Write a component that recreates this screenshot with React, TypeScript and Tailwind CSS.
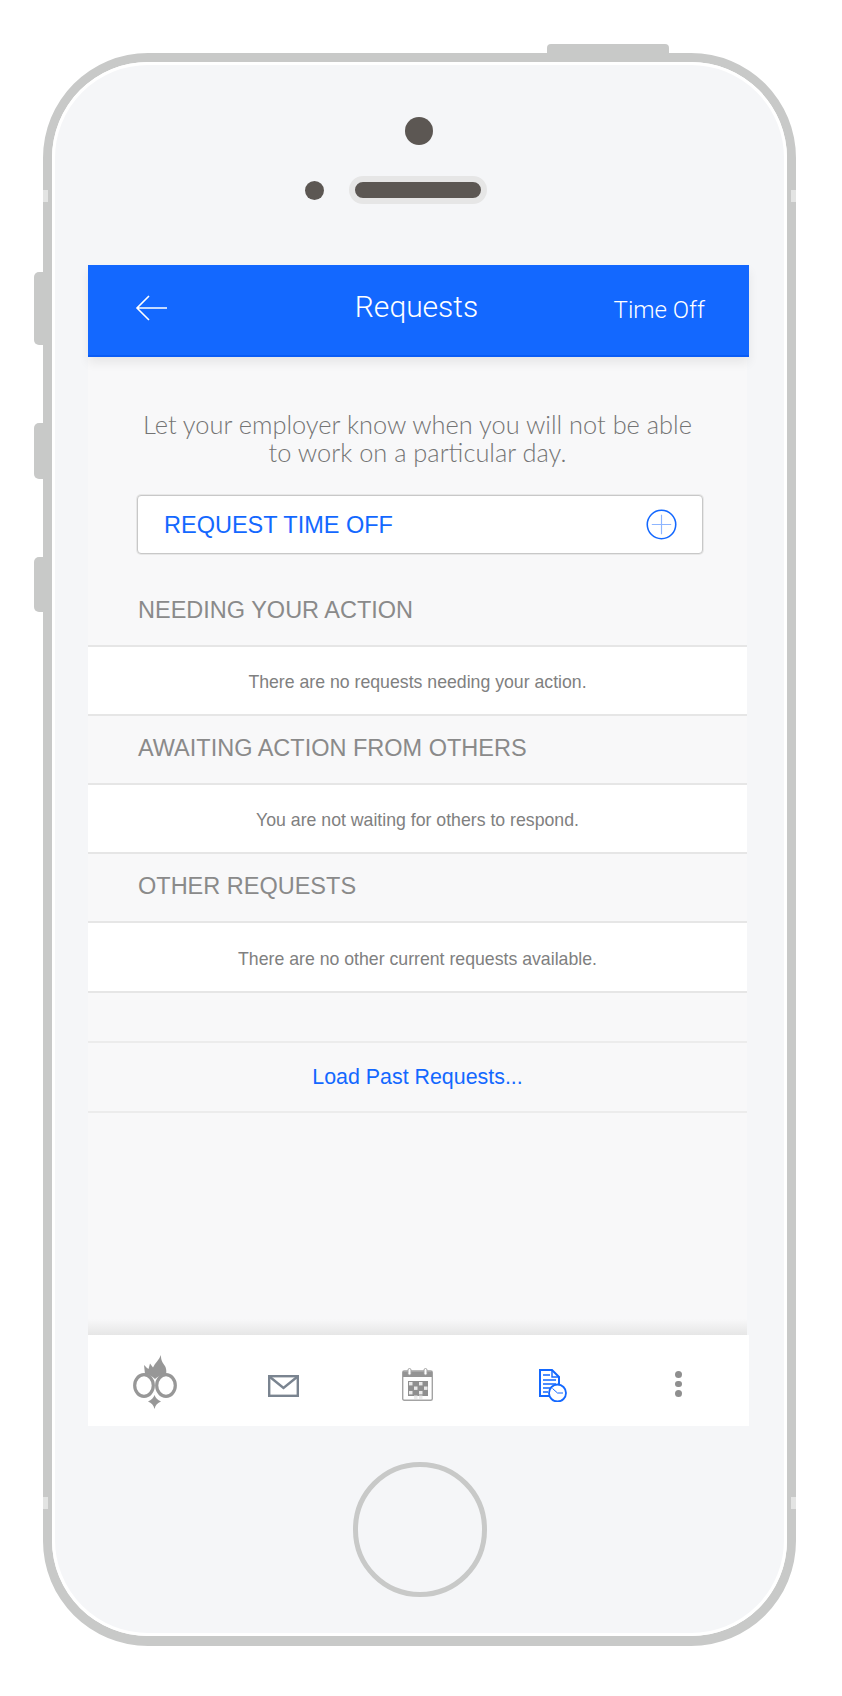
import { ReactNode } from "react";

const sans = "font-['Liberation_Sans',Arial,sans-serif]";

function OwlLogo() {
  return (
    <svg width="44" height="54" viewBox="0 0 44 54" className="block">
      <path
        d="M28 0C27.500 6 31 9 32.500 12C33.500 15 33.500 17 33 19.500C30 19 25 21 22 24C19 21 15 19 12 19L11 10C13 12 14 13 15.500 14L17 8.500L20 12.500C22 8 26 5 28 0Z"
        fill="#979797"
      />
      <ellipse cx="11" cy="30.500" rx="9.300" ry="10.800" fill="#fff" stroke="#979797" strokeWidth="3.200" />
      <ellipse cx="33" cy="30.500" rx="9.300" ry="10.800" fill="#fff" stroke="#979797" strokeWidth="3.200" />
      <path d="M21.500 40C22.500 43 24.500 45 28 46.500C24.500 48 22.500 50 21.500 54C20.500 50 18.500 48 15 46.500C18.500 45 20.500 43 21.500 40Z" fill="#979797" />
    </svg>
  );
}

function MailIcon() {
  return (
    <svg width="31" height="22" viewBox="0 0 31 22" className="block">
      <rect x="1.200" y="1.200" width="28.600" height="19.600" fill="none" stroke="#7a8490" strokeWidth="2.400" />
      <path d="M2 2L15.500 13L29 2" fill="none" stroke="#7a8490" strokeWidth="2.400" />
    </svg>
  );
}

function CalendarIcon() {
  const cells = [
    [9, 14], [19, 14], [14, 18.500], [24, 18.500], [9, 23], [19, 23], [14, 27.500], [19, 27.500],
  ];
  return (
    <svg width="31" height="33" viewBox="0 0 31 33" className="block">
      <rect x="0.700" y="3" width="29.600" height="29.300" rx="1.500" fill="#fff" stroke="#a3a3a3" strokeWidth="1.400" />
      <path d="M1 3.500H30V9H1Z" fill="#949494" />
      <rect x="6" y="0.500" width="3" height="6.500" rx="1.500" fill="#fff" stroke="#a3a3a3" />
      <rect x="22" y="0.500" width="3" height="6.500" rx="1.500" fill="#fff" stroke="#a3a3a3" />
      <rect x="6" y="13" width="20" height="15" fill="#8f8f8f" />
      {cells.map(([x, y]) => (
        <rect key={`${x}-${y}`} x={x - 2} y={y} width="3.500" height="3.400" fill="#e9e9e9" />
      ))}
    </svg>
  );
}

function RequestsIcon() {
  return (
    <svg width="29" height="33" viewBox="0 0 29 33" className="block">
      <path d="M1 1H13L20 8V27H1Z" fill="#fff" stroke="#1368ff" strokeWidth="2" />
      <path d="M13 1V8H20" fill="none" stroke="#1368ff" strokeWidth="1.400" />
      <path d="M4 6H11M4 11H17M4 15H17M4 19H12M4 23H9" stroke="#1368ff" strokeWidth="1.500" />
      <circle cx="18.500" cy="24" r="8.500" fill="#fff" stroke="#1368ff" strokeWidth="1.800" />
      <path d="M13.500 19.500L18.500 24H24" fill="none" stroke="#1368ff" strokeWidth="1" />
    </svg>
  );
}

function MoreIcon() {
  return (
    <div className="flex flex-col gap-[3px]">
      <div className="w-[7px] h-[6.5px] rounded-full bg-[#8f8f8f]" />
      <div className="w-[7px] h-[6.5px] rounded-full bg-[#8f8f8f]" />
      <div className="w-[7px] h-[6.5px] rounded-full bg-[#8f8f8f]" />
    </div>
  );
}

function SectionHeading({ children, className }: { children: ReactNode; className: string }) {
  return (
    <div className={`${className} flex items-center pl-[50px] text-[23.500px] leading-none text-[#8a8a8a] ${sans}`}>
      {children}
    </div>
  );
}

function MessageRow({ children, className }: { children: ReactNode; className: string }) {
  return (
    <div className={`${className} pt-[4px] flex items-center justify-center bg-white border-y-2 border-[#e6e6e6] text-[17.700px] text-[#808080] ${sans}`}>
      {children}
    </div>
  );
}

export default function App() {
  return (
    <div className="w-[842px] h-[1696px] bg-white overflow-hidden pt-[53px] pl-[43px]">
      {/* phone body */}
      <div className="relative w-[753px] h-[1593px] rounded-[105px] border-[9px] border-b-[10px] border-[#c8c9c8]">
        {/* hardware buttons */}
        <div className="absolute left-[495px] top-[-18px] w-[122px] h-[10px] rounded-t-[4px] bg-[#c8c9c8]" />
        <div className="absolute left-[-18px] top-[210px] w-[10px] h-[73px] rounded-l-[5px] bg-[#c8c9c8]" />
        <div className="absolute left-[-18px] top-[361px] w-[10px] h-[56px] rounded-l-[5px] bg-[#c8c9c8]" />
        <div className="absolute left-[-18px] top-[495px] w-[10px] h-[55px] rounded-l-[5px] bg-[#c8c9c8]" />

        {/* antenna marks */}
        <div className="absolute left-[-9px] top-[128px] w-[5px] h-[12px] bg-[#e3e4e3]" />
        <div className="absolute right-[-9px] top-[128px] w-[5px] h-[12px] bg-[#e3e4e3]" />
        <div className="absolute left-[-9px] top-[1435px] w-[5px] h-[12px] bg-[#e3e4e3]" />
        <div className="absolute right-[-9px] top-[1435px] w-[5px] h-[12px] bg-[#e3e4e3]" />

        <div className="h-full rounded-[96px] border-[3px] border-white bg-[#f5f6f8] pt-[52px]">
          {/* camera + speaker */}
          <div className="ml-[350px] w-[28px] h-[28px] rounded-full bg-[#5c5753]" />
          <div className="mt-[31px] ml-[250px] flex items-center">
            <div className="w-[19px] h-[19px] rounded-full bg-[#5c5753]" />
            <div className="ml-[25px] w-[138px] h-[28px] rounded-full border-[6px] border-[#e6e6e6] bg-[#5c5753]" />
          </div>

          {/* screen */}
          <div className="mt-[61px] ml-[33px] w-[661px]">
            <div className="relative z-10 h-[92px] grid grid-cols-[1fr_auto_1fr] items-center pb-[6px] bg-[#1368ff] border-b-2 border-[#0a5cf5] shadow-[0_6px_10px_rgba(0,0,0,0.07)]">
              <div className="pl-[47px] pt-[2px]">
                <svg width="32" height="26" viewBox="0 0 32 26" className="block">
                  <path d="M14 1L2 13L14 25M2 13H32" fill="none" stroke="#fff" strokeWidth="1.600" />
                </svg>
              </div>
              <div className="mr-[4px] text-[30px] leading-none font-light text-white font-['Roboto',sans-serif]">
                Requests
              </div>
              <div className="pr-[44px] pt-[6px] text-right text-[24px] leading-none font-light text-white font-['Roboto',sans-serif]">
                Time Off
              </div>
            </div>

            {/* content */}
            <div className="w-[659px] h-[978px] bg-[#f8f8f9] flex flex-col">
              <div className="pt-[53px] text-center text-[25.400px] leading-[28px] font-light text-[#747474] font-['Lato',sans-serif]">
                <p>Let your employer know when you will not be able</p>
                <p>to work on a particular day.</p>
              </div>

              <div className="mt-[29px] ml-[49px] w-[566px] h-[59px] pt-[2px] rounded-[4px] border border-[#c8c8c8] shadow-[0_0_0_1px_#e8e8e8] bg-white flex items-center justify-between pl-[26px] pr-[25px]">
                <span className={`text-[23.500px] leading-none text-[#1368ff] ${sans}`}>REQUEST TIME OFF</span>
                <svg width="31" height="31" viewBox="0 0 32 32" className="block -mt-[3px]">
                  <circle cx="16" cy="16" r="14.700" fill="none" stroke="#1368ff" strokeWidth="1.600" />
                  <path d="M16 6V26M6 16H26" stroke="#8db5ff" strokeWidth="1.200" />
                </svg>
              </div>

              <SectionHeading className="h-[91px] pt-[22px]">NEEDING YOUR ACTION</SectionHeading>
              <MessageRow className="h-[71px]">There are no requests needing your action.</MessageRow>
              <SectionHeading className="h-[67px] pb-[2px]">AWAITING ACTION FROM OTHERS</SectionHeading>
              <MessageRow className="h-[71px]">You are not waiting for others to respond.</MessageRow>
              <SectionHeading className="h-[67px] pb-[2px]">OTHER REQUESTS</SectionHeading>
              <MessageRow className="h-[72px]">There are no other current requests available.</MessageRow>

              <div className={`mt-[48px] h-[72px] flex items-center justify-center border-y-2 border-[#ececec] text-[21.400px] text-[#1368ff] ${sans}`}>
                Load Past Requests...
              </div>

              <div className="mt-auto h-[16px] bg-gradient-to-b from-[#f8f8f9] to-[#e6e6e6]" />
            </div>

            {/* tab bar */}
            <div className="h-[91px] bg-white flex items-start pl-[45px]">
              <div className="mt-[20px]">
                <OwlLogo />
              </div>
              <div className="mt-[40px] ml-[91px]">
                <MailIcon />
              </div>
              <div className="mt-[33px] ml-[103px]">
                <CalendarIcon />
              </div>
              <div className="mt-[34px] ml-[106px]">
                <RequestsIcon />
              </div>
              <div className="mt-[36px] ml-[107px]">
                <MoreIcon />
              </div>
            </div>
          </div>

          {/* home button */}
          <div className="mt-[36px] ml-[298px] w-[134px] h-[135px] rounded-full border-[5px] border-[#c8c9c8]" />
        </div>
      </div>
    </div>
  );
}
